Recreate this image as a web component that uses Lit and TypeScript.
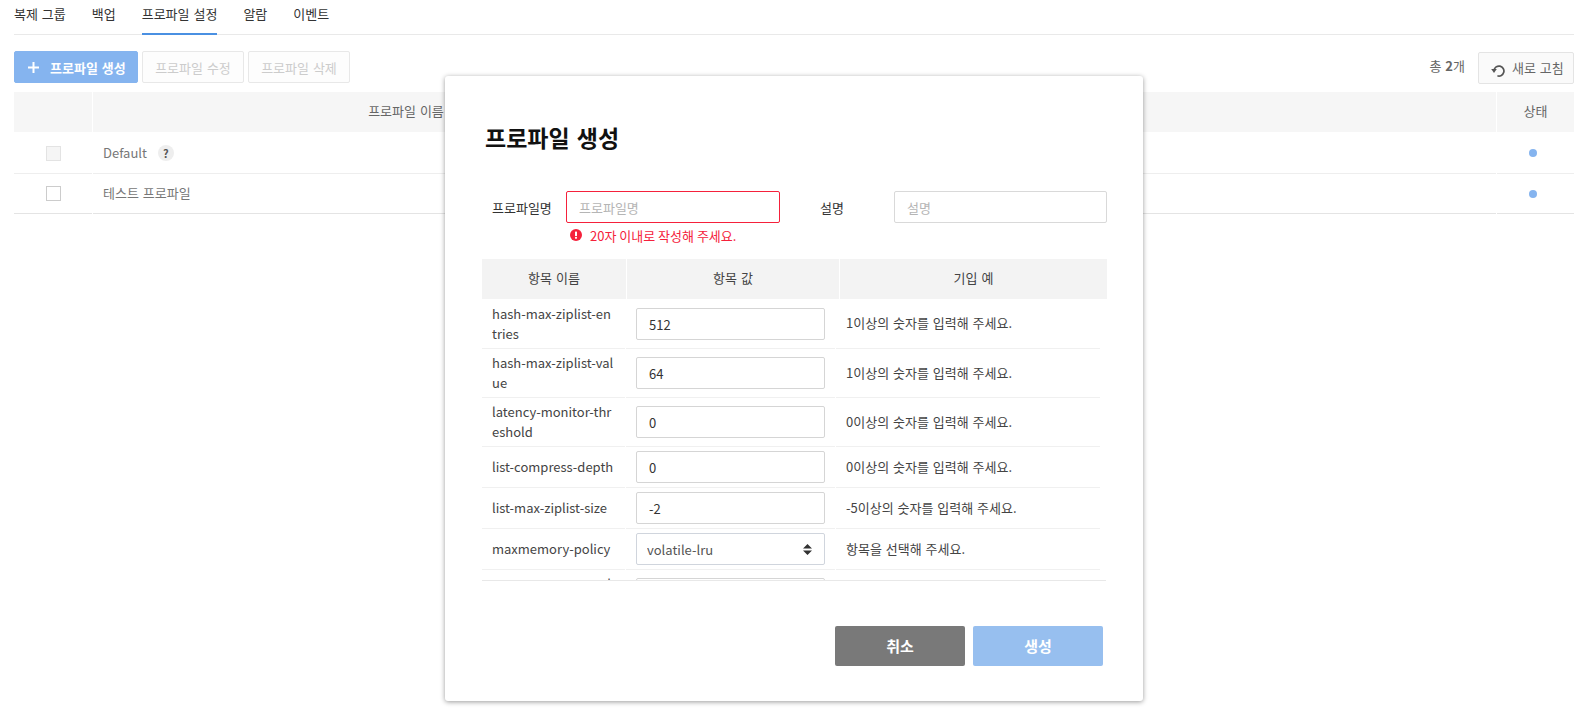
import { LitElement, html, css, svg } from "lit";
import { customElement } from "lit/decorators.js";

const ROWS = [
  { n: "hash-max-ziplist-entries", v: "512", h: "1이상의 숫자를 입력해 주세요.", two: true, first: true },
  { n: "hash-max-ziplist-value", v: "64", h: "1이상의 숫자를 입력해 주세요.", two: true },
  { n: "latency-monitor-threshold", v: "0", h: "0이상의 숫자를 입력해 주세요.", two: true },
  { n: "list-compress-depth", v: "0", h: "0이상의 숫자를 입력해 주세요." },
  { n: "list-max-ziplist-size", v: "-2", h: "-5이상의 숫자를 입력해 주세요." },
  { n: "maxmemory-policy", v: "volatile-lru", h: "항목을 선택해 주세요.", select: true },
  { n: "maxmemory-samples", v: "5", h: "1이상의 숫자를 입력해 주세요.", two: true },
];

const refreshIcon = svg`<svg class="ref" width="14" height="14" viewBox="0 0 14 14" fill="none">
  <path d="M3 6.2 A5 5 0 1 1 6.4 11.8" stroke="#555" stroke-width="1.7"/>
  <path d="M0.2 5 L5.8 5 L3 9 Z" fill="#555"/></svg>`;

const alertIcon = svg`<svg width="12" height="12" viewBox="0 0 12 12">
  <circle cx="6" cy="6" r="6" fill="#f5213b"/>
  <rect x="5" y="2.4" width="2" height="4.6" rx="0.6" fill="#fff"/>
  <circle cx="6" cy="8.8" r="1.1" fill="#fff"/></svg>`;

@customElement("app-root")
export class AppRoot extends LitElement {
  static styles = css`
    :host {
      display: block;
      position: relative;
      height: 720px;
      overflow: hidden;
      background: #fff;
      font-family: "Noto Sans CJK KR", "Noto Sans", sans-serif;
      font-size: 13px;
      word-spacing: 1px;
      color: #333;
    }
    * { box-sizing: border-box; }
    .page { padding: 0 20px 0 14px; }
    .tabs {
      display: flex;
      gap: 26px;
      height: 35px;
      border-bottom: 1px solid #e9e9e9;
    }
    .tab { height: 35px; padding-top: 3px; line-height: 22px; color: #333; }
    .tab.on { border-bottom: 2px solid #4a90e2; }
    .toolbar {
      display: flex;
      align-items: flex-start;
      gap: 4px;
      margin-top: 16px;
      height: 41px;
    }
    .btn {
      width: 102px;
      height: 32px;
      border-radius: 2px;
      border: 1px solid #e8e8e8;
      background: #fdfdfd;
      color: #ccc;
      display: flex;
      align-items: center;
      justify-content: center;
      white-space: nowrap;
    }
    .btn.primary {
      width: 124px;
      padding: 0 0 0 13px;
      background: #85b4ef;
      border-color: #85b4ef;
      color: #fff;
      font-weight: 700;
      justify-content: flex-start;
    }
    .plus { width: 11px; height: 11px; margin-right: 11px; }
    .spacer { flex: 1; }
    .total { color: #666; margin: 3px 9px 0 0; line-height: 24px; }
    .total b { font-weight: 700; }
    .refresh {
      width: 96px;
      margin-top: 1px;
      padding: 0 0 0 12px;
      color: #666;
      background: #fafafa;
      border-color: #e4e4e4;
      justify-content: flex-start;
      line-height: 18px;
    }
    .ref { margin-right: 7px; margin-top: 5px; }

    .grid {
      display: grid;
      grid-template-columns: 78px 626px 776px 77px;
      column-gap: 1px;
    }
    .th {
      height: 40px;
      padding-bottom: 3px;
      background: #f6f6f6;
      color: #666;
      display: flex;
      align-items: center;
      justify-content: center;
    }
    .td {
      height: 42px;
      border-bottom: 1px solid #eee;
      display: flex;
      align-items: center;
      color: #777;
    }
    .td.last { height: 40px; padding-bottom: 2px; border-bottom-color: #e4e4e4; }
    .td.dotcell { padding-bottom: 0; }
    .td.c { justify-content: center; }
    .name { padding-left: 10px; }
    .box { width: 15px; height: 15px; border: 1px solid #ccc; background: #fff; margin: 1px 0 0 1px; }
    .box.off { background: #f5f5f5; border-color: #e3e3e3; }
    .q {
      width: 16px;
      height: 16px;
      border-radius: 50%;
      background: #eee;
      color: #555;
      font-size: 11px;
      font-weight: 700;
      display: inline-flex;
      align-items: center;
      justify-content: center;
      margin-left: 11px;
    }
    .dot { width: 8px; height: 8px; border-radius: 50%; background: #85b4ef; margin-right: 5px; }

    .modal {
      position: absolute;
      left: 445px;
      top: 76px;
      width: 698px;
      height: 625px;
      background: #fff;
      border-radius: 3px;
      box-shadow: 0 1px 5px rgba(0, 0, 0, 0.4);
      padding: 45px 37px 35px 37px;
      display: flex;
      flex-direction: column;
    }
    h2 {
      margin: 0 0 0 3px;
      font-size: 23px;
      line-height: 32px;
      font-weight: 700;
      word-spacing: 2px;
      color: #111;
    }
    .form {
      display: grid;
      grid-template-columns: 84px 214px 114px 213px;
      margin-top: 38px;
      align-items: center;
    }
    .label { padding-left: 10px; color: #333; }
    .label.second { padding-left: 40px; }
    input, select {
      font: inherit;
      height: 32px;
      width: 100%;
      border: 1px solid #d9d9d9;
      border-radius: 2px;
      padding: 0 12px;
      color: #333;
      background: #fff;
      outline: none;
    }
    input::placeholder { color: #b5b5b5; opacity: 1; }
    input.err { border-color: #f5213b; }
    .error {
      grid-column: 2 / 5;
      display: flex;
      align-items: center;
      gap: 8px;
      height: 22px;
      margin-top: 1px;
      padding-left: 4px;
      word-spacing: 0;
      color: #f5213b;
    }
    .mhead {
      display: grid;
      grid-template-columns: 144px 212px 267px;
      column-gap: 1px;
      margin-top: 13px;
    }
    .mhead div {
      height: 40px;
      padding-bottom: 3px;
      background: #f3f3f3;
      display: flex;
      align-items: center;
      justify-content: center;
      color: #444;
    }
    .scroll {
      height: 282px;
      overflow: hidden;
      border-bottom: 1px solid #e8e8e8;
    }
    .mbody {
      width: 618px;
      display: grid;
      grid-template-columns: 143px 209px 264px;
      column-gap: 1px;
    }
    .mc {
      border-bottom: 1px solid #f0f0f0;
      display: flex;
      align-items: center;
      min-height: 41px;
      color: #444;
    }
    .mc.n { padding: 0 10px; line-height: 20px; word-break: break-all; }
    .mc.tall { height: 49px; }
    .mc.top { height: 50px; padding-top: 1px; }
    .mc.v { padding-left: 10px; }
    .mc.v input, .mc.v .sel { width: 189px; }
    .mc.v input { border-color: #d5d5d5; }
    .mc.h { padding-left: 10px; padding-bottom: 2px; }
    .mc.h.top { padding-top: 0; }
    .sel { position: relative; }
    .sel select { appearance: none; padding: 0 10px; color: #555; border-color: #d0d5dd; }
    .sel svg { position: absolute; right: 13px; top: 11px; }
    .actions {
      display: flex;
      justify-content: flex-end;
      gap: 8px;
      margin-top: 45px;
      padding-right: 3px;
    }
    .act {
      width: 130px;
      height: 40px;
      padding-bottom: 2px;
      border-radius: 2px;
      display: flex;
      align-items: center;
      justify-content: center;
      color: #fff;
      font-size: 15px;
      font-weight: 700;
      background: #797979;
    }
    .act.go { background: #97bfef; }
  `;

  render() {
    return html`
      <div class="page">
        <div class="tabs">
          <div class="tab">복제 그룹</div>
          <div class="tab">백업</div>
          <div class="tab on">프로파일 설정</div>
          <div class="tab">알람</div>
          <div class="tab">이벤트</div>
        </div>
        <div class="toolbar">
          <div class="btn primary">
            <svg class="plus" viewBox="0 0 11 11"><path d="M5.5 0v11M0 5.5h11" stroke="#fff" stroke-width="2"/></svg>
            프로파일 생성
          </div>
          <div class="btn">프로파일 수정</div>
          <div class="btn">프로파일 삭제</div>
          <div class="spacer"></div>
          <div class="total">총 <b>2</b>개</div>
          <div class="btn refresh">${refreshIcon}새로 고침</div>
        </div>
        <div class="grid">
          <div class="th"></div><div class="th">프로파일 이름</div><div class="th">설명</div><div class="th">상태</div>
          <div class="td c"><span class="box off"></span></div>
          <div class="td"><span class="name">Default</span><span class="q">?</span></div>
          <div class="td"></div>
          <div class="td c"><span class="dot"></span></div>
          <div class="td c last"><span class="box"></span></div>
          <div class="td last"><span class="name">테스트 프로파일</span></div>
          <div class="td last"></div>
          <div class="td c last dotcell"><span class="dot"></span></div>
        </div>
      </div>
      <div class="modal">
        <h2>프로파일 생성</h2>
        <div class="form">
          <div class="label">프로파일명</div>
          <input class="err" placeholder="프로파일명" />
          <div class="label second">설명</div>
          <input placeholder="설명" />
          <div class="error">${alertIcon}<span>20자 이내로 작성해 주세요.</span></div>
        </div>
        <div class="mhead"><div>항목 이름</div><div>항목 값</div><div>기입 예</div></div>
        <div class="scroll">
          <div class="mbody">
            ${ROWS.map((r) => {
              const k = r.first ? "top" : r.two ? "tall" : "";
              return html`
                <div class="mc n ${k}">${r.n}</div>
                <div class="mc v ${k}">
                  ${r.select
                    ? html`<div class="sel">
                        <select><option>${r.v}</option></select>
                        <svg width="9" height="11" viewBox="0 0 9 11"><path d="M4.5 0 9 4.4H0zM4.5 11 0 6.6h9z" fill="#333"/></svg>
                      </div>`
                    : html`<input .value=${r.v} />`}
                </div>
                <div class="mc h ${k}">${r.h}</div>
              `;
            })}
          </div>
        </div>
        <div class="actions">
          <div class="act">취소</div>
          <div class="act go">생성</div>
        </div>
      </div>
    `;
  }
}
